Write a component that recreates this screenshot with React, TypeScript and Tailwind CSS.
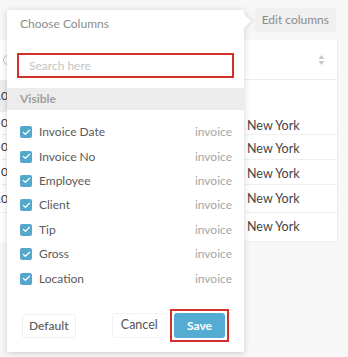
import { Check } from 'lucide-react'

const columns = ['Invoice Date', 'Invoice No', 'Employee', 'Client', 'Tip', 'Gross', 'Location']

const tableRows = [
  { h: 'h-[23px]', left: '0' },
  { h: 'h-[25px]', left: '0' },
  { h: 'h-[25px]', left: '0' },
  { h: 'h-[28px]', left: '.0' },
  { h: 'h-[29px]', left: '' },
]

const App = () => {
  return (
    <div className="relative w-[348px] h-[357px] overflow-hidden bg-[#f7f7f7] font-['Lato','Liberation_Sans',sans-serif]">
      {/* page behind the popover */}
      <div className="flex flex-col">
        <div className="h-[40px] flex items-start justify-end pr-[12px] pt-[8px]">
          <div className="h-[24px] px-[7px] flex items-center rounded-[3px] bg-[#f0f0f0] text-[12px] text-[#8a8a8a]">
            Edit columns
          </div>
        </div>
        <div className="flex">
          {/* clipped numbers on the left */}
          <div className="w-[8px] overflow-hidden flex flex-col items-end text-[12px] text-[#333] bg-white">
            <div className="h-[40px] flex items-center">
              <span className="w-[10px] h-[10px] rounded-full border border-[#bbb] shrink-0 translate-x-[5px]" />
            </div>
            <div className="h-[32px] bg-[#eeeeee] w-full flex items-center justify-end">.0</div>
            {tableRows.map((r, i) => (
              <div key={i} className={`${r.h} flex items-center border-b border-[#eee]`}>{r.left}</div>
            ))}
          </div>
          <div className="w-[236px]" />
          {/* right table column */}
          <div className="w-[94px] bg-white border-r border-[#eaeaea]">
            <div className="h-[40px] flex items-center justify-end pr-[12px] border-b border-[#eee]">
              <svg width="7" height="12" viewBox="0 0 7 12" fill="#c8c8c8">
                <path d="M3.5 1 L6.5 5 H0.5 Z" />
                <path d="M3.5 11 L6.5 7 H0.5 Z" />
              </svg>
            </div>
            <div className="h-[32px]" />
            {tableRows.map((r, i) => (
              <div key={i} className={`${r.h} pl-[3px] pt-[5px] text-[12.5px] text-[#444] border-b border-[#f0f0f0]`}>
                New York
              </div>
            ))}
          </div>
        </div>
      </div>

      {/* popover */}
      <div className="absolute left-[7px] top-[10px] w-[237px] h-[342px] bg-white shadow-[0_1px_6px_rgba(0,0,0,0.18)] flex flex-col">
        <div className="absolute -right-[5px] top-[6px] w-[10px] h-[10px] bg-white rotate-45 shadow-[2px_-2px_3px_rgba(0,0,0,0.08)]" />
        <div className="px-[13px] pt-[6px] h-[43px] text-[12px] text-[#8c8c8c] leading-[16px]">Choose Columns</div>
        <div className="mx-[10px] h-[25px] border-2 border-[#d3302c] flex items-center pl-[10px] text-[12px] text-[#c4c4c4]">
          Search here
        </div>
        <div className="mt-[10px] h-[22px] bg-[#ececec] flex items-center px-[13px] text-[12px] font-bold text-[#a0a0a0]">
          Visible
        </div>
        <div className="mt-[10px] flex flex-col">
          {columns.map((c) => (
            <div key={c} className="h-[24.4px] flex items-center pl-[13px] pr-[12px]">
              <span className="w-[12px] h-[12px] rounded-[2px] bg-[#55a8cc] flex items-center justify-center">
                <Check size={9} strokeWidth={3.5} color="white" />
              </span>
              <span className="ml-[7px] text-[12px] text-[#5a5a5a]">{c}</span>
              <span className="ml-auto text-[12px] text-[#a6a6a6]">invoice</span>
            </div>
          ))}
        </div>
        <div className="mt-auto mb-[10px] flex items-center px-[15px]">
          <div className="h-[24px] w-[57px] flex items-center justify-center rounded-[3px] border border-[#efefef] text-[12px] font-semibold text-[#666]">
            Default
          </div>
          <div className="ml-[36px] h-[25px] w-[59px] flex items-center justify-center rounded-[3px] border border-[#f3f3f3] text-[12.5px] text-[#555]">
            Cancel
          </div>
          <div className="ml-[3px] border-2 border-[#d3302c] p-[2px]">
            <div className="h-[25px] w-[51px] flex items-center justify-center rounded-[3px] bg-[#55acd3] text-[12px] font-bold text-white">
              Save
            </div>
          </div>
        </div>
      </div>
    </div>
  )
}

export default App
